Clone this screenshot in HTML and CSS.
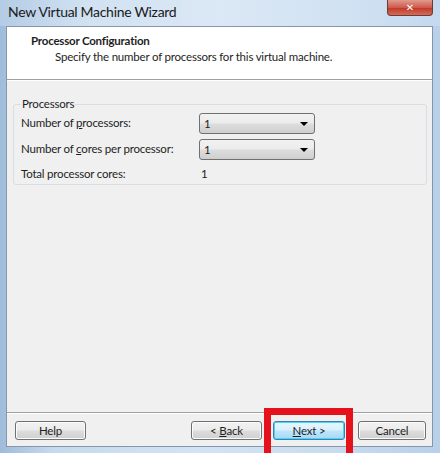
FILE: index.html
```html
<!DOCTYPE html>
<html lang="en">
<head>
    <meta charset="UTF-8">
    <title>New Virtual Machine Wizard</title>
    <link rel="stylesheet" href="styles.css">
</head>
<body>
    <div class="window">
        <div class="titlebar">
            <span class="title">New Virtual Machine Wizard</span>
            <a href="javascript:;" class="close">&#x2715;</a>
        </div>
        <div class="client">
            <div class="header">
                <div class="head-title">Processor Configuration</div>
                <div class="head-sub">Specify the number of processors for this virtual machine.</div>
            </div>
            <div class="content">
                <fieldset class="group">
                    <legend>Processors</legend>
                    <div class="row first">
                        <label>Number of <u>p</u>rocessors:</label>
                        <div class="combo"><span>1</span><i class="arrow"></i></div>
                    </div>
                    <div class="row">
                        <label>Number of <u>c</u>ores per processor:</label>
                        <div class="combo"><span>1</span><i class="arrow"></i></div>
                    </div>
                    <div class="row total">
                        <label>Total processor cores:</label>
                        <span class="value">1</span>
                    </div>
                </fieldset>
            </div>
            <div class="footer">
                <a href="javascript:;" class="btn">Help</a>
                <a href="javascript:;" class="btn back">&lt; <u>B</u>ack</a>
                <a href="javascript:;" class="btn next"><u>N</u>ext &gt;</a>
                <a href="javascript:;" class="btn cancel">Cancel</a>
            </div>
        </div>
        <div class="mark"></div>
    </div>
</body>
</html>
```

FILE: styles.css
```css
*{margin: 0;padding: 0;box-sizing: border-box}
body{
    font-family: Lato, "Noto Sans", sans-serif;
    font-size: 11.5px;
    letter-spacing: -0.2px;
    color: #1e1e1e;
}
.window{
    position: relative;
    width: 440px;
    height: 453px;
    display: flex;
    flex-direction: column;
    background: linear-gradient(90deg, #9fbcdb 0%, #c6daee 12%, #d3e3f3 45%, #c9dcef 75%, #b8d0ea 100%);
    overflow: hidden;
}
.titlebar{
    height: 26px;
    display: flex;
    align-items: flex-start;
    background: linear-gradient(90deg, #b4cce5 0%, #d2e2f2 20%, #dbe8f5 50%, #d0e1f2 80%, #c4d8ee 100%);
}
.title{
    padding: 3px 0 0 8px;
    font-size: 14px;
    letter-spacing: -0.3px;
    line-height: 18px;
    color: #1a1a1a;
    white-space: nowrap;
}
.close{
    margin-left: auto;
    margin-right: 7px;
    width: 46px;
    height: 16px;
    line-height: 15px;
    border: 1px solid #6e3a36;
    border-top: none;
    border-radius: 0 0 4px 4px;
    background: linear-gradient(#e09b8f 0%, #d0594b 50%, #c03a2b 55%, #d36c5a 100%);
    color: #fff;
    text-align: center;
    text-decoration: none;
    font-family: "DejaVu Sans", sans-serif;
    font-size: 10px;
    font-weight: bold;
    letter-spacing: 0;
}
.client{
    flex: 1;
    margin: 0 7px 6px 6px;
    border: 1px solid #8696a8;
    background: #f0f0f0;
    display: flex;
    flex-direction: column;
}
.header{
    height: 53px;
    background: #fff;
    border-bottom: 1px solid #a0a0a0;
    padding-top: 6px;
    line-height: 16px;
    white-space: nowrap;
}
.head-title{
    padding-left: 24px;
    font-weight: bold;
}
.head-sub{
    padding-left: 48px;
}
.content{
    flex: 1;
    padding: 15px 5px 0 6px;
    border-top: 1px solid #fff;
}
.group{
    border: 1px solid #d5dfe5;
    border-radius: 3px;
    padding: 0 0 0 7px;
}
.group legend{
    padding: 0 1px;
    line-height: 16px;
}
.row{
    display: flex;
    align-items: center;
    height: 26px;
    line-height: 16px;
    white-space: nowrap;
}
.row.first{
    margin-top: -2px;
}
.row label{
    width: 178px;
}
.combo{
    position: relative;
    width: 116px;
    height: 21px;
    border: 1px solid #707070;
    border-radius: 3px;
    background: linear-gradient(#f2f2f2 0%, #ebebeb 48%, #dddddd 52%, #cfcfcf 100%);
    padding: 2px 0 0 4px;
    line-height: 16px;
}
.arrow{
    position: absolute;
    right: 6px;
    top: 8px;
    border-left: 4px solid transparent;
    border-right: 4px solid transparent;
    border-top: 4px solid #000;
}
.row.total{
    height: 20px;
    margin-top: 2px;
}
.value{
    padding-left: 2px;
}
.footer{
    height: 34px;
    border-top: 1px solid #a0a0a0;
    box-shadow: inset 0 1px 0 #fff;
    display: flex;
    align-items: flex-start;
    padding: 8px 6px 0 8px;
}
.btn{
    display: block;
    width: 71px;
    height: 19px;
    line-height: 17px;
    border: 1px solid #707070;
    border-radius: 3px;
    background: linear-gradient(#f2f2f2 0%, #ebebeb 48%, #dddddd 52%, #cfcfcf 100%);
    box-shadow: inset 0 0 0 1px #fbfbfb;
    color: #1e1e1e;
    text-align: center;
    text-decoration: none;
}
.back{
    margin-left: auto;
}
.next{
    margin-left: 11px;
    width: 72px;
    border-color: #3c7fb1;
    background: linear-gradient(#eaf6fd 0%, #d9f0fc 48%, #bee6fd 52%, #a7d9f5 100%);
    box-shadow: inset 0 0 0 1px #48d5fa;
}
.cancel{
    margin-left: 13px;
    width: 68px;
}
.mark{
    position: absolute;
    left: 264px;
    top: 408px;
    width: 89px;
    height: 52px;
    border: 7px solid #e5121b;
}
```
